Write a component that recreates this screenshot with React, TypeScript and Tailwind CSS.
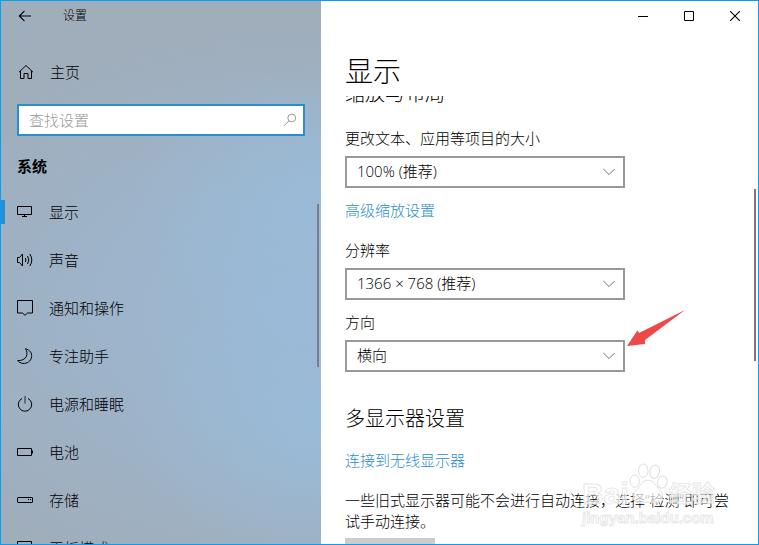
import type { ReactNode } from "react";

type NavItem = {
  label: string;
  icon: ReactNode;
  active?: boolean;
};

function Icon({ children }: { children: ReactNode }) {
  return (
    <svg
      viewBox="0 0 16 16"
      className="size-4 shrink-0"
      fill="none"
      stroke="currentColor"
      aria-hidden="true"
    >
      {children}
    </svg>
  );
}

const navItems: NavItem[] = [
  {
    label: "显示",
    active: true,
    icon: <path d="M.5 2.5h14v8H.5zM7.5 10.5v2M5 12.5h5" />,
  },
  {
    label: "声音",
    icon: (
      <>
        <path d="M.5 5.5h2L5.500 2v12l-3-3.500h-2z" />
        <path d="M8.300 6q1.300 2 0 4M10.500 4q2.600 4 0 8M12.800 2q4 6 0 12" />
      </>
    ),
  },
  {
    label: "通知和操作",
    icon: <path d="M.5.5h15v12.500h-5L8 15.300 5.500 13h-5z" />,
  },
  {
    label: "专注助手",
    icon: (
      <path d="M8.500.7C13 2 15 5 14.600 8.700 14 13.500 10 15.700 6 15.400 3.500 15.200 1.500 14 .7 12.600 4.500 12.700 8 11.500 9.300 8.500 10.500 5.500 10 3 8.500.7z" />
    ),
  },
  {
    label: "电源和睡眠",
    icon: (
      <>
        <path d="M5 2.500A6.700 6.700 0 1 0 11 2.500" />
        <path d="M8 0v7.500" stroke="#5a6672" strokeWidth="1.800" />
      </>
    ),
  },
  {
    label: "电池",
    icon: <path d="M.5 4.500h14v7H.5zM15.500 6.500v3" />,
  },
  {
    label: "存储",
    icon: (
      <>
        <rect x=".5" y="5.500" width="15" height="5" rx="0.5" />
        <path d="M11 7.500h1M13 7.500h1" />
      </>
    ),
  },
  {
    label: "平板模式",
    icon: <path d="M.5 1.500h14v10H.5zM4 13.500h7" />,
  },
];

function Dropdown({
  id,
  label,
  options,
  className,
}: {
  id: string;
  label: string;
  options: string[];
  className: string;
}) {
  return (
    <div className={className}>
      <label htmlFor={id} className="block leading-5">
        {label}
      </label>
      <div className="relative mt-2 max-w-[280px]">
        <select
          id={id}
          className="block h-8 w-full appearance-none border-2 border-[#999999] bg-white pr-9 pb-px pl-[10px] text-[15px] text-black outline-none"
        >
          {options.map((option) => (
            <option key={option}>{option}</option>
          ))}
        </select>
        <svg
          viewBox="0 0 12 8"
          className="pointer-events-none absolute top-3 right-[10px] h-2 w-3"
          fill="none"
          stroke="#707070"
          aria-hidden="true"
        >
          <path d="M.4 1 6 6.600 11.600 1" />
        </svg>
      </div>
    </div>
  );
}

function Sidebar() {
  return (
    <aside className="relative flex w-80 shrink-0 flex-col overflow-hidden bg-[#a0adba] bg-[radial-gradient(ellipse_190px_140px_at_100%_37%,#98bedeb0,transparent),radial-gradient(ellipse_190px_150px_at_100%_78%,#98bedeb0,transparent),radial-gradient(ellipse_430px_300px_at_90%_57%,#9bb9d6,transparent)]">
      <div className="flex h-[30px] shrink-0 items-center">
        <button type="button" aria-label="返回" className="ml-4 flex size-4 items-center justify-center">
          <Icon>
            <path d="M14 8H2.500M7.500 2.800 2.300 8l5.200 5.200" strokeWidth="1.1" />
          </Icon>
        </button>
        <span className="ml-[30px] text-xs">设置</span>
      </div>

      <a href="#home" className="mt-[17px] flex h-12 shrink-0 items-center gap-4 px-[17px]">
        <Icon>
          <path d="M1 8.200 8 1.500l7 6.700M2.500 7v7.500h3.500v-5h4v5h3.500V7" />
        </Icon>
        主页
      </a>

      <div className="relative mx-4 mt-2 shrink-0">
        <input
          type="text"
          aria-label="查找设置"
          placeholder="查找设置"
          className="block h-8 w-full border-2 border-[#2a8dd0] bg-white pr-9 pb-px pl-[10px] text-[15px] font-light outline-none placeholder:text-[#999999]"
        />
        <svg
          viewBox="0 0 14 14"
          className="absolute top-[9px] right-2 size-[14px]"
          fill="none"
          stroke="#999999"
          aria-hidden="true"
        >
          <circle cx="8.700" cy="5" r="3.900" />
          <path d="M6 7.800 1 12.800" />
        </svg>
      </div>

      <h2 className="mt-2 flex h-11 shrink-0 items-center px-4 font-bold">系统</h2>

      <nav>
        {navItems.map((item) => (
          <a
            key={item.label}
            href={`#${item.label}`}
            aria-current={item.active ? "page" : undefined}
            className="relative flex h-12 items-center gap-4 px-4"
          >
            {item.active && <span className="absolute top-3 left-0 h-6 w-1 bg-[#2a8dd0]" />}
            <Icon>{item.icon}</Icon>
            {item.label}
          </a>
        ))}
      </nav>

      <span className="absolute top-[203px] right-[2px] h-[163px] w-[2px] bg-[#7c7e82]" />
    </aside>
  );
}

function WindowControls() {
  return (
    <div className="flex h-[30px] shrink-0 justify-end">
      <button type="button" aria-label="最小化" className="flex w-[46px] items-center justify-center">
        <svg viewBox="0 0 10 10" className="size-[10px]" stroke="currentColor" fill="none">
          <path d="M0 5.500h10" />
        </svg>
      </button>
      <button type="button" aria-label="最大化" className="flex w-[46px] items-center justify-center">
        <svg viewBox="0 0 10 10" className="size-[10px]" stroke="currentColor" fill="none">
          <path d="M.5.5h9v9h-9z" />
        </svg>
      </button>
      <button type="button" aria-label="关闭" className="flex w-[46px] items-center justify-center">
        <svg viewBox="0 0 10 10" className="size-[10px]" stroke="currentColor" fill="none">
          <path d="M0 0l10 10M10 0 0 10" strokeWidth="1.100" />
        </svg>
      </button>
    </div>
  );
}

function Watermark() {
  return (
    <div
      aria-hidden="true"
      className="pointer-events-none absolute right-[40px] bottom-4 w-[136px] font-['Liberation_Sans','Noto_Sans_CJK_SC',sans-serif] font-bold text-white/70 [-webkit-text-stroke:1px_#dcdcdcb0]"
    >
      <div className="flex h-[46px] items-end">
        <span className="text-[30px] leading-7">Bai</span>
        <svg
          viewBox="0 0 42 44"
          className="mb-[2px] h-11 w-[40px] shrink-0"
          fill="#ffffffb0"
          stroke="#dcdcdc"
        >
          <ellipse cx="6" cy="19" rx="4.800" ry="6.500" />
          <ellipse cx="15" cy="8" rx="5" ry="7" />
          <ellipse cx="27" cy="9" rx="5" ry="7" transform="rotate(10 27 9)" />
          <ellipse cx="35" cy="20" rx="5" ry="6.500" transform="rotate(15 35 20)" />
          <path d="M20 18c6 0 8 6 12 10 5 5 4 13-3 14-4 .5-6-1-9-1s-6 2-10 1c-7-1-7-9-2-14 4-4 6-10 12-10z" />
        </svg>
        <span className="text-[23px] leading-7">经验</span>
      </div>
      <div className="text-[15px] leading-5">jingyan.baidu.com</div>
    </div>
  );
}

export default function App() {
  return (
    <div className="relative flex h-screen overflow-hidden border border-[#0a9bf5] bg-white font-['Open_Sans','Noto_Sans_CJK_SC',sans-serif] text-[15px] font-light text-black">
      <Sidebar />

      <main className="flex min-w-0 flex-1 flex-col">
        <WindowControls />
        <h1 className="mt-5 mb-[5px] shrink-0 px-6 text-[28px] leading-10">显示</h1>

        <div className="min-h-0 flex-1 overflow-hidden pr-6 pl-6">
          <h2 className="-mt-4 text-[20px] leading-7">缩放与布局</h2>
          <Dropdown
            id="scale"
            label="更改文本、应用等项目的大小"
            options={["100% (推荐)", "125%"]}
            className="mt-5"
          />
          <a href="#scaling" className="mt-3 block leading-5 text-[#2a8dd0]">
            高级缩放设置
          </a>
          <Dropdown
            id="resolution"
            label="分辨率"
            options={["1366 × 768 (推荐)", "1280 × 720"]}
            className="mt-5"
          />
          <div className="relative">
            <Dropdown
              id="orientation"
              label="方向"
              options={["横向", "纵向"]}
              className="mt-3"
            />
            <svg
              viewBox="0 0 58 38"
              className="pointer-events-none absolute -top-[3px] left-[282px] h-[38px] w-[58px]"
              fill="#ee4848"
              aria-hidden="true"
            >
              <path d="M0 37 10.500 21.300 12 24 58 1 18 31v4z" />
            </svg>
          </div>

          <h2 className="mt-[33px] text-[20px] leading-7">多显示器设置</h2>
          <a href="#wireless" className="mt-[17px] block leading-5 text-[#2a8dd0]">
            连接到无线显示器
          </a>
          <p className="mt-5 leading-[21px]">
            一些旧式显示器可能不会进行自动连接，选择“检测”即可尝试手动连接。
          </p>
          <button type="button" className="mt-[6px] block h-8 w-[90px] bg-[#cccccc]">
            检测
          </button>
        </div>
      </main>

      <span className="absolute top-[188px] right-[2px] h-[172px] w-[2px] bg-[#7a7a7a]" />
      <Watermark />
    </div>
  );
}
